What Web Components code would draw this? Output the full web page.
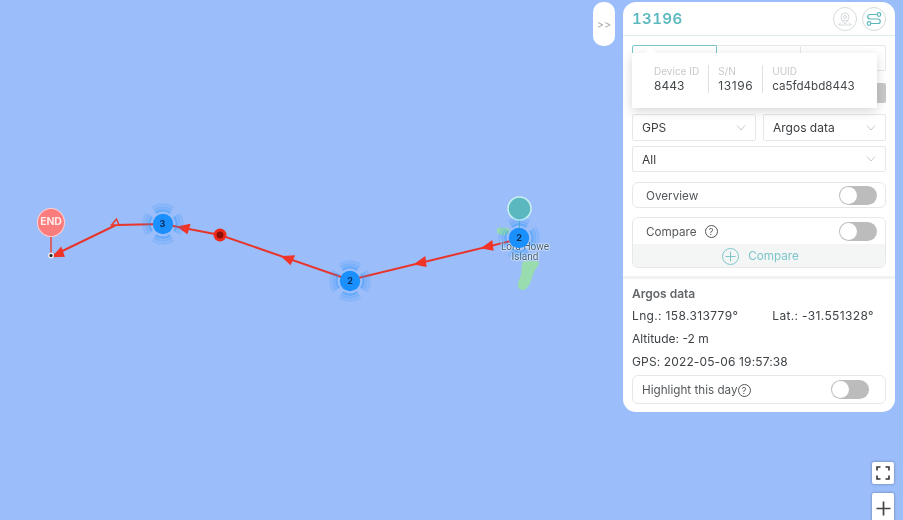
<!DOCTYPE html>
<html>
<head>
<meta charset="utf-8">
<title>13196</title>
<style>
    html, body {
        margin: 0;
        height: 100%;
        overflow: hidden;
        background: #9bbdf9;
    }
</style>
</head>
<body>
<track-map>
    <map-cluster count="3" style="left:162.5px;top:223.5px"></map-cluster>
    <map-cluster count="2" style="left:350px;top:281px"></map-cluster>
    <map-cluster count="2" style="left:519px;top:238px"></map-cluster>
    <side-panel></side-panel>
</track-map>
<script>
class MapCluster extends HTMLElement {
    constructor() {
        super();
        this.shadow = this.attachShadow({mode: 'open'});
    }
    connectedCallback() {
        // arcs come in four groups, top/bottom/left/right, fading outwards
        let arcs = '';
        for (let r of [13.5, 16.5, 19.5]) {
            const d = r * 0.55;
            const k = r * 0.835;
            const o = r === 13.5 ? 0.42 : r === 16.5 ? 0.26 : 0.14;
            arcs += `<g fill="none" stroke="#1a90ff" stroke-width="2.4" stroke-opacity="${o}">
                <path d="M${-d} ${-k}A${r} ${r} 0 0 1 ${d} ${-k}"/>
                <path d="M${k} ${-d}A${r} ${r} 0 0 1 ${k} ${d}"/>
                <path d="M${d} ${k}A${r} ${r} 0 0 1 ${-d} ${k}"/>
                <path d="M${-k} ${d}A${r} ${r} 0 0 1 ${-k} ${-d}"/>
            </g>`;
        }
        this.shadow.innerHTML = `
        <style>
            :host {
                position: absolute;
                width: 0;
                height: 0;
            }
            svg {
                position: absolute;
                left: -25px;
                top: -25px;
            }
            span {
                position: absolute;
                left: -10px;
                top: -10px;
                width: 20px;
                height: 20px;
                text-align: center;
                font: bold 9px/20px "Inter", sans-serif;
                color: #0b2a52;
            }
        </style>
        <svg width="50" height="50" viewBox="-25 -25 50 50">
            ${arcs}
            <circle r="10.2" fill="#1a90ff"/>
        </svg>
        <span>${this.getAttribute('count')}</span>`;
    }
}
customElements.define('map-cluster', MapCluster);

class TrackMap extends HTMLElement {
    constructor() {
        super();
        this.shadow = this.attachShadow({mode: 'open'});
    }
    arrow(x, y, angle) {
        return `<path transform="translate(${x} ${y}) rotate(${angle})" d="M-6 0L5 -4.5L4 4.5Z" fill="#f03428" stroke="#f03428" stroke-width="1.2"/>`;
    }
    connectedCallback() {
        this.shadow.innerHTML = `
        <style>
            :host {
                display: block;
                position: relative;
                width: 903px;
                height: 520px;
                overflow: hidden;
                background: #9bbdf9;
                font-family: "Inter", "Liberation Sans", sans-serif;
                filter: blur(0.3px);
            }
            svg.route {
                position: absolute;
                left: 0;
                top: 0;
            }
            .label {
                position: absolute;
                left: 495px;
                top: 242px;
                width: 60px;
                text-align: center;
                font: 10px/10px "Roboto", sans-serif;
                color: #3d5c74;
                text-shadow: 0 0 2px #fff, 0 0 2px #fff, 0 0 2px #fff;
            }
            .end {
                position: absolute;
                left: 37px;
                top: 207.5px;
                width: 28px;
                height: 29px;
                box-sizing: border-box;
                border: 1.5px solid #ffd0d0;
                border-radius: 50%;
                background: #fb7c7c;
                color: #ffe9e9;
                font: bold 10.5px/26px "Inter", sans-serif;
                text-align: center;
                letter-spacing: -0.2px;
            }
            .handle {
                position: absolute;
                left: 593px;
                top: 2px;
                width: 22px;
                height: 44px;
                border-radius: 10px;
                background: #fff;
                color: #aaa;
                font-size: 11px;
                line-height: 46px;
                text-align: center;
            }
            .ctrl {
                position: absolute;
                left: 872px;
                width: 22px;
                background: #fff;
                border-radius: 2px;
                box-shadow: 0 0 3px rgba(0,0,0,0.35);
                display: flex;
                align-items: center;
                justify-content: center;
            }
        </style>
        <svg class="route" width="903" height="520" viewBox="0 0 903 520">
            <path d="M497 229c3-2 9-2 13 1l-2 4c-4 2-8 1-11-1z" fill="#98dcb0"/>
            <path d="M522 262c4-1 11-2 17 0c1 3-3 6-5 10c-2 5-3 12-8 17c-3 2-7 1-8-2c-1-5 2-8 3-12z" fill="#98dcb0"/>
            <line x1="51" y1="236" x2="51" y2="255" stroke="#e8433a" stroke-width="1.5"/>
            <polyline points="519,239 350,280 220,235 163,224 116,225 52,256" fill="none" stroke="#e8352b" stroke-width="2"/>
            ${this.arrow(488, 246.5, -13.5)}
            ${this.arrow(421, 262.7, -13.5)}
            ${this.arrow(288, 258.6, 19)}
            ${this.arrow(184, 228, 11)}
            <path d="M111.500 225L116.500 219L119 225Z" fill="#9bbdf9" stroke="#f03428" stroke-width="1.400"/>
            ${this.arrow(58.500, 254, -26)}
            <circle cx="51" cy="255.500" r="3" fill="#e6e6ee"/>
            <circle cx="51" cy="255.500" r="1.500" fill="#222"/>
            <circle cx="220" cy="235" r="6.500" fill="#f02a1c"/>
            <circle cx="220" cy="235" r="3.500" fill="#8b0f0a"/>
            <line x1="519.500" y1="220" x2="519.500" y2="232" stroke="#5cb8bf" stroke-width="1"/>
            <circle cx="519.500" cy="208.500" r="11.500" fill="#5cb8bf" stroke="#c9f1ef" stroke-width="1.500"/>
        </svg>
        <div class="label">Lord Howe<br>Island</div>
        <div class="end">END</div>
        <slot></slot>
        <div class="handle">&gt;&gt;</div>
        <div class="ctrl" style="top:462px;height:22px">
            <svg width="14" height="14" viewBox="0 0 14 14" fill="none" stroke="#333" stroke-width="1.600">
                <path d="M1 4.500V1H4.500M9.500 1H13V4.500M13 9.500V13H9.500M4.500 13H1V9.500"/>
            </svg>
        </div>
        <div class="ctrl" style="top:493px;height:30px">
            <svg width="15" height="15" viewBox="0 0 15 15" fill="none" stroke="#444" stroke-width="1.700">
                <path d="M7.500 0.500V14.500M0.500 7.500H14.500"/>
            </svg>
        </div>`;
    }
}
customElements.define('track-map', TrackMap);

class SelectBox extends HTMLElement {
    constructor() {
        super();
        this.shadow = this.attachShadow({mode: 'open'});
    }
    connectedCallback() {
        this.shadow.innerHTML = `
        <style>
            :host {
                display: flex;
                align-items: center;
                justify-content: space-between;
                box-sizing: border-box;
                height: 26px;
                padding: 0 9px;
                border: 1px solid #e6e8e8;
                border-radius: 2px;
                background: #fff;
                font-size: 12px;
                color: #3a3d40;
            }
            svg {
                display: block;
            }
        </style>
        <slot></slot>
        <svg width="10" height="6" viewBox="0 0 10 6" fill="none" stroke="#c5c8cb" stroke-width="1"><path d="M1 .5L5 5L9 .5"/></svg>`;
    }
}
customElements.define('select-box', SelectBox);

class HelpMark extends HTMLElement {
    constructor() {
        super();
        this.shadow = this.attachShadow({mode: 'open'});
        this.shadow.innerHTML = `
        <style>
            :host {
                display: inline-flex;
                width: 13px;
                height: 13px;
                box-sizing: border-box;
                border: 1px solid #555;
                border-radius: 50%;
                align-items: center;
                justify-content: center;
                font-size: 9px;
                line-height: 1;
                color: #555;
            }
        </style>
        ?`;
    }
}
customElements.define('help-mark', HelpMark);

class ToggleRow extends HTMLElement {
    constructor() {
        super();
        this.shadow = this.attachShadow({mode: 'open'});
        this.shadow.innerHTML = `
        <style>
            :host {
                display: flex;
                align-items: center;
                justify-content: space-between;
                box-sizing: border-box;
                height: 26px;
                padding: 0 8px 0 13px;
                border: 1px solid #e6e8e8;
                border-radius: 6px;
                background: #fff;
                font-size: 11.7px;
                color: #55595c;
            }
            .label {
                display: flex;
                align-items: center;
                padding-top: 1px;
            }
            .switch {
                position: relative;
                width: 38px;
                height: 19px;
                border-radius: 10px;
                background: #bcbcbc;
            }
            .switch::before {
                content: "";
                position: absolute;
                left: 1px;
                top: 1px;
                width: 17px;
                height: 17px;
                border-radius: 50%;
                background: #fff;
            }
        </style>
        <div class="label"><slot></slot></div>
        <div class="switch"></div>`;
    }
}
customElements.define('toggle-row', ToggleRow);

class InfoPopover extends HTMLElement {
    constructor() {
        super();
        this.shadow = this.attachShadow({mode: 'open'});
        this.shadow.innerHTML = `
        <style>
            :host {
                position: absolute;
                left: 9px;
                top: 51px;
                width: 245px;
                height: 55px;
                display: flex;
                align-items: center;
                padding: 0 0 4px 22px;
                box-sizing: border-box;
                background: #fff;
                box-shadow: 0 3px 10px rgba(0,0,0,0.16);
                font-size: 12px;
                color: #44484b;
            }
            :host::before {
                content: "";
                position: absolute;
                left: 13px;
                top: -4px;
                width: 10px;
                height: 10px;
                background: #fff;
                transform: rotate(45deg);
            }
            .col {
                display: flex;
                flex-direction: column;
                gap: 1px;
                padding: 0 9px;
                border-left: 1px solid #dfe2e2;
                line-height: 14px;
            }
            .col:first-of-type {
                border-left: 0;
                padding-left: 0;
            }
            .sn {
                letter-spacing: 0.6px;
            }
            .uuid {
                font-size: 11.6px;
            }
            small {
                font-size: 10px;
                line-height: 13px;
                letter-spacing: 0;
                color: #c6c9cb;
            }
        </style>
        <div class="col"><small>Device ID</small>8443</div>
        <div class="col sn"><small>S/N</small>13196</div>
        <div class="col uuid"><small>UUID</small>ca5fd4bd8443</div>`;
    }
}
customElements.define('info-popover', InfoPopover);

class SidePanel extends HTMLElement {
    constructor() {
        super();
        this.shadow = this.attachShadow({mode: 'open'});
    }
    connectedCallback() {
        this.shadow.innerHTML = `
        <style>
            :host {
                position: absolute;
                left: 623px;
                top: 2px;
                width: 272px;
                height: 410px;
                box-sizing: border-box;
                background: #fff;
                border-radius: 13px;
                font-family: "Inter", "Liberation Sans", sans-serif;
                font-size: 12px;
                color: #3f4346;
                display: block;
            }
            header {
                display: flex;
                align-items: center;
                justify-content: space-between;
                height: 33px;
                padding: 0 9px;
                border-bottom: 1px solid #dfeaea;
            }
            h1 {
                margin: 0;
                font-size: 15px;
                font-weight: 600;
                font-variant-numeric: tabular-nums;
                color: #5cb8bf;
                letter-spacing: 0.4px;
            }
            .icons {
                display: flex;
                gap: 5px;
            }
            .icons svg {
                display: block;
            }
            .body {
                padding: 9px 9px 0;
            }
            .tabs {
                display: grid;
                grid-template-columns: repeat(3, 1fr);
                height: 26px;
            }
            .tabs div {
                border: 1px solid #e6e8e8;
                border-left: 0;
                border-radius: 0 2px 2px 0;
            }
            .tabs div:first-child {
                border: 1px solid #7cc6cb;
                border-radius: 2px 0 0 2px;
            }
            .under {
                display: flex;
                justify-content: flex-end;
                height: 20px;
                margin-top: 12px;
            }
            .under div {
                width: 30px;
                border-radius: 2px;
                background: #c8c8c8;
            }
            .pair {
                display: grid;
                grid-template-columns: 124px 123px;
                gap: 7px;
                margin-top: 11px;
            }
            .pair select-box {
                height: 27px;
            }
            .all {
                margin-top: 5px;
            }
            .overview {
                margin-top: 10px;
            }
            .compare {
                margin-top: 9px;
                height: 51px;
                box-sizing: border-box;
                border: 1px solid #e6e8e8;
                border-radius: 6px;
                overflow: hidden;
            }
            .compare toggle-row {
                border: 0;
            }
            .compare help-mark {
                margin-left: 8px;
            }
            .add {
                display: flex;
                align-items: center;
                justify-content: center;
                gap: 9px;
                height: 23px;
                padding: 1px 0 0 3px;
                box-sizing: border-box;
                background: #f4f5f5;
                color: #7cc6cb;
                font-size: 11.7px;
            }
            .divider {
                height: 3px;
                margin-top: 8px;
                background: #f1f2f2;
            }
            .data {
                padding: 0 9px;
            }
            h2 {
                margin: 7px 0 0;
                font-size: 12px;
                line-height: 15px;
                font-weight: 600;
                color: #63676a;
            }
            p {
                margin: 8px 0 0;
                line-height: 15px;
            }
            h2 + p {
                margin-top: 7px;
            }
            .coords {
                display: flex;
                gap: 34px;
                letter-spacing: 0.35px;
            }
            .gps {
                letter-spacing: 0.13px;
            }
            .highlight {
                margin-top: 6px;
                height: 29px;
                padding-left: 9px;
                padding-right: 16px;
            }
        </style>
        <header>
            <h1>13196</h1>
            <div class="icons">
                <svg width="24" height="24" viewBox="0 0 24 24" fill="none" stroke="#d5dadb" stroke-width="1">
                    <circle cx="12" cy="12" r="11.500"/>
                    <circle cx="12" cy="10" r="4"/>
                    <circle cx="12" cy="10" r="1.500"/>
                    <path d="M9 13.500L12 17L15 13.500M8 15.500L5.500 18H18.500L16 15.500"/>
                </svg>
                <svg width="24" height="24" viewBox="0 0 24 24" fill="none" stroke="#5cb8bf" stroke-width="1.200">
                    <circle cx="12" cy="12" r="11.500" stroke="#d5dadb" stroke-width="1"/>
                    <circle cx="17" cy="7.500" r="1.800"/>
                    <circle cx="7" cy="16.500" r="1.800"/>
                    <path d="M15 7.500H8a2.200 2.200 0 0 0 0 4.500H16a2.200 2.200 0 0 1 0 4.500H9"/>
                </svg>
            </div>
        </header>
        <div class="body">
            <div class="tabs"><div></div><div></div><div></div></div>
            <div class="under"><div></div></div>
            <div class="pair">
                <select-box>GPS</select-box>
                <select-box>Argos data</select-box>
            </div>
            <select-box class="all">All</select-box>
            <toggle-row class="overview">Overview</toggle-row>
            <div class="compare">
                <toggle-row>Compare<help-mark></help-mark></toggle-row>
                <div class="add">
                    <svg width="17" height="17" viewBox="0 0 17 17" fill="none" stroke="#7cc6cb" stroke-width="1">
                        <circle cx="8.500" cy="8.500" r="8"/>
                        <path d="M8.500 3.500V13.500M3.500 8.500H13.500"/>
                    </svg>
                    Compare
                </div>
            </div>
        </div>
        <div class="divider"></div>
        <div class="data">
            <h2>Argos data</h2>
            <p class="coords"><span>Lng.: 158.313779°</span><span>Lat.: -31.551328°</span></p>
            <p>Altitude: -2 m</p>
            <p class="gps">GPS: 2022-05-06 19:57:38</p>
            <toggle-row class="highlight"><span>Highlight this day</span><help-mark></help-mark></toggle-row>
        </div>
        <info-popover></info-popover>`;
    }
}
customElements.define('side-panel', SidePanel);
</script>
</body>
</html>
